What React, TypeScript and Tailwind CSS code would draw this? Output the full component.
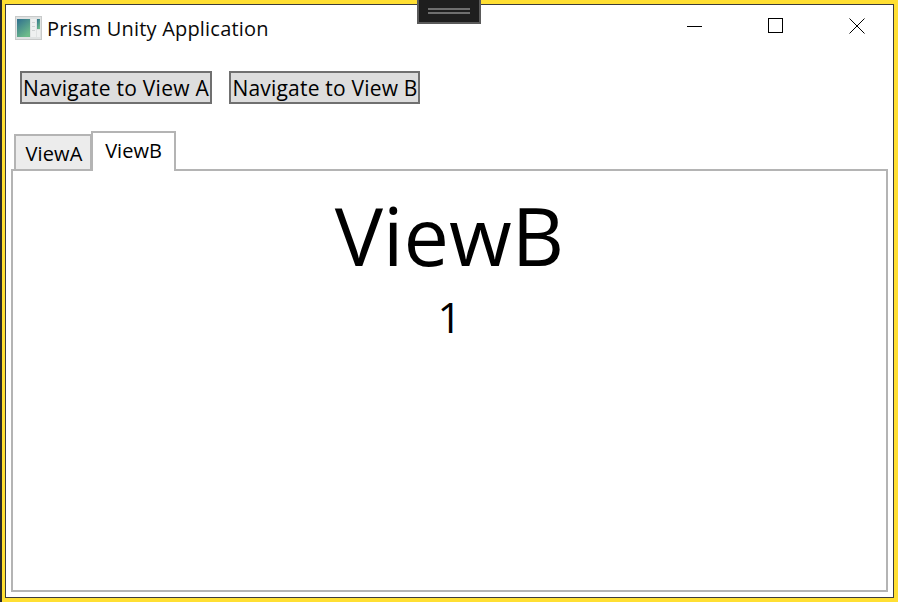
function AppIcon() {
  return (
    <svg width="27" height="24" viewBox="0 0 27 24" className="shrink-0">
      <defs>
        <linearGradient id="pane" x1="0" y1="0" x2="0.6" y2="1">
          <stop offset="0" stopColor="#2f6f8f" />
          <stop offset="1" stopColor="#6dbb8a" />
        </linearGradient>
      </defs>
      <rect x="0.5" y="0.5" width="26" height="23" fill="#dfe2e2" stroke="#c8caca" />
      <rect x="2" y="3" width="13" height="18" fill="url(#pane)" />
      <rect x="16" y="3" width="5" height="18" fill="#eef0f0" />
      <rect x="17" y="6" width="3" height="1" fill="#cfd3d3" />
      <rect x="17" y="10" width="3" height="1" fill="#cfd3d3" />
      <rect x="17" y="14" width="3" height="1" fill="#cfd3d3" />
      <rect x="22" y="3" width="3" height="10" fill="url(#pane)" />
      <rect x="22" y="14" width="3" height="7" fill="#eef0f0" />
    </svg>
  );
}

export default function App() {
  return (
    <div className="relative w-[898px] h-[602px] overflow-hidden bg-[#ffdf33] border-l-2 border-[#2a2a2a] pt-[4px] pr-[4px] pb-[4px] pl-[3px] font-['Open_Sans',sans-serif] text-black">
      <div className="flex flex-col h-full bg-white border border-[#3c3c3c] pl-[5px] pr-[5px] pb-[5px]">
        <div className="flex items-center h-[45px] pl-[4px] shrink-0">
          <AppIcon />
          <span className="ml-[5px] text-[20px] leading-none tracking-[0.2px] text-[#0a0a0a] mt-[2px]">
            Prism Unity Application
          </span>
          <div className="ml-auto flex items-center pr-[23px] gap-[66px] -mt-[4px]">
            <svg width="15" height="15" viewBox="0 0 15 15">
              <path d="M0 8.5H15" stroke="#000" fill="none" />
            </svg>
            <svg width="15" height="15" viewBox="0 0 15 15">
              <rect x="0.5" y="0.5" width="14" height="14" stroke="#000" fill="none" />
            </svg>
            <svg width="16" height="16" viewBox="0 0 16 16">
              <path d="M0.5 0.5L15.5 15.5M15.5 0.5L0.5 15.5" stroke="#000" fill="none" />
            </svg>
          </div>
        </div>

        <div className="flex gap-[17px] pl-[9px] pt-[21px] shrink-0">
          <button className="h-[33px] w-[192px] pt-[2px] border-2 border-[#707070] bg-[#dddddd] text-[21px] leading-none tracking-[0.27px] whitespace-nowrap">
            Navigate to View A
          </button>
          <button className="h-[33px] w-[191px] pt-[2px] pl-[1px] border-2 border-[#707070] bg-[#dddddd] text-[21px] leading-none tracking-[0.2px] whitespace-nowrap">
            Navigate to View B
          </button>
        </div>

        <div className="flex items-end pl-[3px] mt-[27px] shrink-0 relative z-10 -mb-[2px]">
          <div className="flex items-center justify-center h-[37px] w-[78px] pt-[2px] pl-[2px] border-2 border-[#b4b4b4] bg-[#ececec] text-[20px] leading-none tracking-[0.1px]">
            ViewA
          </div>
          <div className="flex items-center justify-center h-[40px] w-[85px] -ml-[1px] pb-[3px] border-2 border-b-0 border-[#b4b4b4] bg-white text-[20px] leading-none">
            ViewB
          </div>
        </div>

        <div className="flex flex-col items-center flex-1 border-2 border-[#b4b4b4] bg-white">
          <div className="text-[81px] leading-none mt-[23px]">ViewB</div>
          <div className="text-[42px] leading-none mt-[21px]">1</div>
        </div>
      </div>

      <div className="absolute top-0 left-[415px] w-[64px] h-[24px] border-2 border-t-0 border-[#5a5a5a] bg-[#1e1e1e] flex flex-col items-center pt-[8px] gap-[2px]">
        <div className="w-[42px] h-[2px] bg-[#6e6e6e]" />
        <div className="w-[42px] h-[2px] bg-[#6e6e6e]" />
      </div>
    </div>
  );
}
